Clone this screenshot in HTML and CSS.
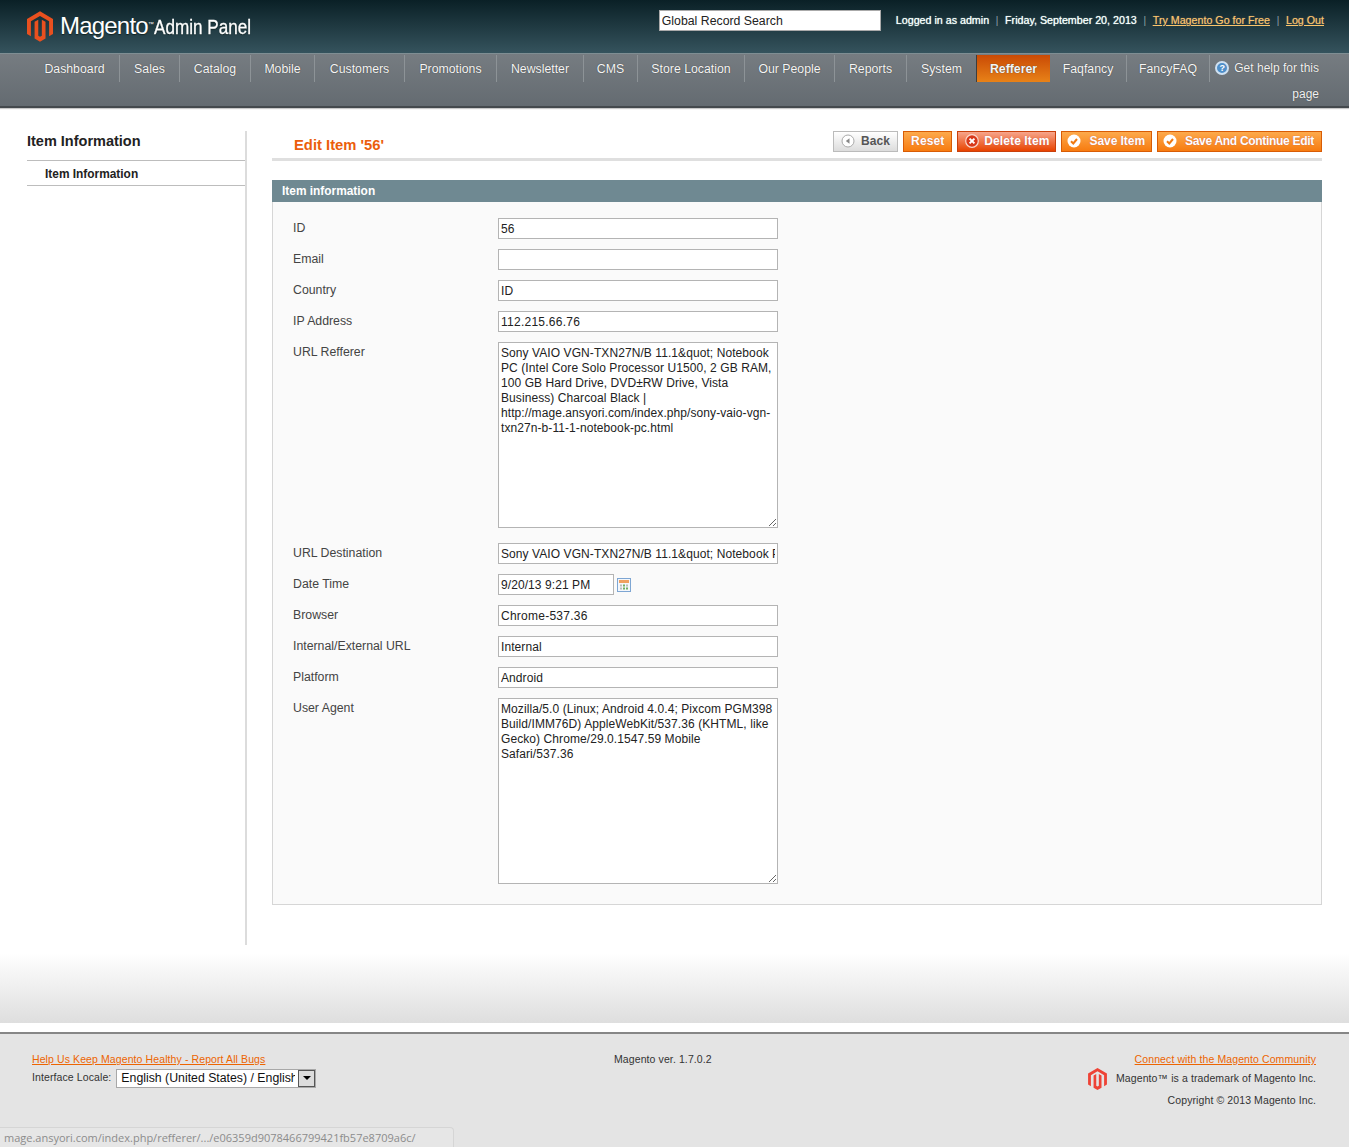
FILE: index.html
```html
<!DOCTYPE html>
<html lang="en">
<head>
<meta charset="utf-8">
<title>Magento Admin</title>
<link rel="stylesheet" href="styles.css">
</head>
<body>
<header class="top">
  <a class="logo" href="#">
    <svg class="logo-mark" viewBox="0 0 24 28" width="26" height="31"><path fill="#e9501f" d="M12 0 24 7v14l-3.6 2.1V9.1L12 4.2 3.6 9.1v14L0 21V7z"/><path fill="#e9501f" d="M13.7 7.7l3.4 2V25L12 28 7 25V9.700l3.4-2v14.800l1.600.9 1.700-.9z"/></svg>
    <span class="logo-word">Magento</span><span class="logo-tm">™</span><span class="logo-admin">Admin Panel</span>
  </a>
  <div class="top-right">
    <input class="global-search" type="text" value="Global Record Search">
    <p class="user-info">Logged in as admin<i>|</i>Friday, September 20, 2013<i>|</i><a href="#">Try Magento Go for Free</a><i>|</i><a href="#">Log Out</a></p>
  </div>
</header>
<nav class="nav">
  <ul class="nav-list">
    <li><a href="#">Dashboard</a></li>
    <li><a href="#">Sales</a></li>
    <li><a href="#">Catalog</a></li>
    <li><a href="#">Mobile</a></li>
    <li><a href="#">Customers</a></li>
    <li><a href="#">Promotions</a></li>
    <li><a href="#">Newsletter</a></li>
    <li><a href="#">CMS</a></li>
    <li><a href="#">Store Location</a></li>
    <li><a href="#">Our People</a></li>
    <li><a href="#">Reports</a></li>
    <li class="pre-active"><a href="#">System</a></li>
    <li class="active"><a href="#">Refferer</a></li>
    <li><a href="#">Faqfancy</a></li>
    <li><a href="#">FancyFAQ</a></li>
  </ul>
  <a class="help" href="#"><span class="help-icon">?</span>Get help for this page</a>
</nav>
<main class="layout">
  <aside class="side">
    <h3 class="side-title">Item Information</h3>
    <a class="side-item" href="#">Item Information</a>
  </aside>
  <section class="content">
    <div class="content-head">
      <h3 class="page-title">Edit Item '56'</h3>
      <div class="actions">
        <button class="btn btn-back"><svg class="ico" viewBox="0 0 14 14"><circle cx="7" cy="7" r="6" fill="#fff" stroke="#aaa"/><path d="M8.500 4.300v5.400L4.800 7z" fill="#888"/></svg>Back</button>
        <button class="btn btn-reset">Reset</button>
        <button class="btn btn-delete"><svg class="ico" viewBox="0 0 14 14"><circle cx="7" cy="7" r="6.300" fill="#d8391a" stroke="#fbd9cd" stroke-width="1.200"/><path d="M4.600 4.600l4.800 4.800M9.400 4.600l-4.800 4.800" stroke="#fff" stroke-width="2"/></svg>Delete Item</button>
        <button class="btn btn-save"><svg class="ico" viewBox="0 0 14 14"><circle cx="7" cy="7" r="6.500" fill="#fff"/><path d="M4 7.200l2.300 2.300L10 5" fill="none" stroke="#f07a12" stroke-width="2"/></svg>Save Item</button>
        <button class="btn btn-save btn-long"><svg class="ico" viewBox="0 0 14 14"><circle cx="7" cy="7" r="6.500" fill="#fff"/><path d="M4 7.200l2.300 2.300L10 5" fill="none" stroke="#f07a12" stroke-width="2"/></svg>Save And Continue Edit</button>
      </div>
    </div>
    <h4 class="section-head">Item information</h4>
    <div class="fieldset">
      <div class="row"><label>ID</label><input type="text" value="56"></div>
      <div class="row"><label>Email</label><input type="text" value=""></div>
      <div class="row"><label>Country</label><input type="text" value="ID"></div>
      <div class="row"><label>IP Address</label><input class="num" type="text" value="112.215.66.76"></div>
      <div class="row row-tall"><label>URL Refferer</label><textarea>Sony VAIO VGN-TXN27N/B 11.1&amp;quot; Notebook PC (Intel Core Solo Processor U1500, 2 GB RAM, 100 GB Hard Drive, DVD±RW Drive, Vista Business) Charcoal Black | http://mage.ansyori.com/index.php/sony-vaio-vgn-txn27n-b-11-1-notebook-pc.html</textarea></div>
      <div class="row"><label>URL Destination</label><input type="text" value="Sony VAIO VGN-TXN27N/B 11.1&amp;quot; Notebook PC (Intel Core Solo Processor U1500, 2 GB RAM)"></div>
      <div class="row"><label>Date Time</label><input class="date" type="text" value="9/20/13 9:21 PM"><svg class="cal" viewBox="0 0 14 14" width="14" height="14"><rect x=".5" y=".5" width="13" height="13" fill="#f4f7fb" stroke="#7ea6d3"/><rect x="2" y="2" width="10" height="3" fill="#f0a060"/><path d="M3 6.500h2v2H3zM9 6.500h2v2H9zM3 9.500h2v2H3z" fill="#bbb"/><path d="M6 6.500h2v2H6zM6 9.500h2v2H6zM9 9.500h2v2H9z" fill="#6fae63"/></svg></div>
      <div class="row"><label>Browser</label><input class="num" type="text" value="Chrome-537.36"></div>
      <div class="row"><label>Internal/External URL</label><input type="text" value="Internal"></div>
      <div class="row"><label>Platform</label><input type="text" value="Android"></div>
      <div class="row row-last"><label>User Agent</label><textarea>Mozilla/5.0 (Linux; Android 4.0.4; Pixcom PGM398 Build/IMM76D) AppleWebKit/537.36 (KHTML, like Gecko) Chrome/29.0.1547.59 Mobile Safari/537.36</textarea></div>
    </div>
  </section>
</main>
<div class="fade"></div>
<footer class="foot">
  <div class="foot-left">
    <a href="#">Help Us Keep Magento Healthy - Report All Bugs</a>
    <div class="locale"><span class="locale-label">Interface Locale:</span><div class="select"><span class="select-text">English (United States) / English</span><span class="select-btn"><i></i></span></div></div>
  </div>
  <div class="foot-mid">Magento ver. 1.7.0.2</div>
  <div class="foot-right">
    <a href="#">Connect with the Magento Community</a>
    <p class="tm"><svg viewBox="0 0 24 28" width="19" height="22"><path fill="#ee4336" d="M12 0 24 7v14l-3.600 2.100V9.100L12 4.200 3.600 9.100v14L0 21V7z"/><path fill="#ee4336" d="M13.700 7.700l3.400 2V25L12 28 7 25V9.700l3.400-2v14.800l1.600.9 1.700-.9z"/></svg>Magento™ is a trademark of Magento Inc.</p>
    <p class="copy">Copyright © 2013 Magento Inc.</p>
  </div>
</footer>
<div class="status">mage.ansyori.com/index.php/refferer/.../e06359d9078466799421fb57e8709a6c/</div>
</body>
</html>
```

FILE: styles.css
```css
* { box-sizing: border-box; }
html, body { margin: 0; padding: 0; }
body { position: relative; height: 1147px; background: #fff; color: #2f2f2f; font: 12.5px/1.2 "Liberation Sans", Arial, sans-serif; overflow: hidden; }
a { color: inherit; }
h3, h4, p, ul { margin: 0; padding: 0; }

.top { height: 54px; display: flex; justify-content: space-between; padding: 0 25px 0 27px; background: linear-gradient(#0a2026, #35535d); border-bottom: 1px solid #7f8e93; }
.logo { display: flex; align-items: center; height: 52px; color: #fff; text-decoration: none; text-shadow: 0 1px 1px #122; }
.logo-mark { margin-right: 7px; }
.logo-word { font-size: 24px; letter-spacing: -.8px; }
.logo-tm { font-size: 6px; align-self: flex-start; margin: 21px 0 0 0; }
.logo-admin { display: inline-block; font-size: 21px; margin: 2px 0 0 0; white-space: nowrap; -webkit-text-stroke: .3px #fff; transform: scaleX(.815); transform-origin: left center; }
.top-right { display: flex; align-items: flex-start; padding-top: 10px; }
.global-search { width: 222px; height: 21px; padding: 0 2px; border: 1px solid #aaa; background: #fff; color: #222; font: 12.3px "Liberation Sans", sans-serif; margin-right: 15px; }
.user-info { color: #fff; font-size: 10.7px; line-height: 20px; text-shadow: 0 0 1px #cfe; white-space: nowrap; }
.user-info i { font-style: normal; color: #8fa3a9; margin: 0 6.700px; text-shadow: none; font-size: 10px; }
.user-info a { color: #fbc56b; text-decoration: underline; text-shadow: 0 0 1px #a86; }

.nav { height: 54px; position: relative; display: flex; background: linear-gradient(#767c81, #646b71); border-bottom: 2px solid #44494d; box-shadow: 0 1px 1px #c8c8c8; padding: 1px 30px 0; }
.nav-list { display: flex; list-style: none; height: 27px; }
.nav-list li { text-align: center; border-right: 1px solid #8d9397; line-height: 28px; height: 27px; font-size: 12.3px; }
.nav-list li:nth-child(1) { width: 90px; }
.nav-list li:nth-child(2) { width: 60px; }
.nav-list li:nth-child(3) { width: 71px; }
.nav-list li:nth-child(4) { width: 64px; }
.nav-list li:nth-child(5) { width: 90px; }
.nav-list li:nth-child(6) { width: 92px; }
.nav-list li:nth-child(7) { width: 87px; }
.nav-list li:nth-child(8) { width: 54px; }
.nav-list li:nth-child(9) { width: 107px; }
.nav-list li:nth-child(10) { width: 90px; }
.nav-list li:nth-child(11) { width: 72px; }
.nav-list li:nth-child(12) { width: 69px; }
.nav-list li:nth-child(13) { width: 74px; }
.nav-list li:nth-child(14) { width: 77px; }
.nav-list li:nth-child(15) { width: 83px; }
.nav-list a { color: #f6f6f6; text-decoration: none; text-shadow: 0 0 1px #333; white-space: nowrap; }
.nav-list .pre-active { border-right: 0; }
.nav-list .active { background: linear-gradient(#c94a05, #e88218); border-left: 1px solid #3d3d3d; border-right: 0; font-weight: 700; }
.help { flex: 0 0 105px; margin-left: 4px; color: #f2f2f2; text-decoration: none; text-align: right; line-height: 26px; font-size: 12px; text-shadow: 0 0 1px #333; }
.help-icon { display: inline-block; width: 14px; height: 14px; margin-right: 5px; border-radius: 50%; background: #4f8fc9; border: 2px solid #cfe1f2; color: #fff; font: 700 9px/10px "Liberation Sans", sans-serif; text-align: center; vertical-align: 1px; text-shadow: none; }

.layout { display: flex; gap: 25px; padding: 23px 27px 0; }
.side { flex: 0 0 220px; border-right: 2px solid #dcdcdc; }
.side-title { height: 30px; border-bottom: 1px solid #bdbdbd; font-size: 14.500px; line-height: 21px; color: #222; }
.side-item { display: block; height: 25px; padding-left: 18px; border-bottom: 1px solid #bdbdbd; color: #222; font-weight: 700; font-size: 11.900px; line-height: 26px; text-decoration: none; }
.content { flex: 1; padding-bottom: 40px; }
.content-head { display: flex; justify-content: space-between; height: 30px; border-bottom: 3px solid #dfdfdf; margin-bottom: 19px; }
.page-title { padding: 6px 0 0 22px; color: #eb5e0b; font-size: 14.800px; }
.actions { display: flex; gap: 5px; height: 21px; }
.btn { display: inline-flex; align-items: center; height: 21px; padding: 0 7px 2px; border: 1px solid #d85c05; background: linear-gradient(#fdaa4c, #f77b10); color: #fff; font: 700 12px "Liberation Sans", sans-serif; letter-spacing: .1px; text-shadow: 0 0 1px #b55; white-space: nowrap; }
.ico { width: 14px; height: 14px; }
.btn-back { border-color: #bbb; background: linear-gradient(#fff, #dcdcdc); color: #555; text-shadow: none; }
.btn-back .ico { margin-right: 6px; }
.btn-delete { padding-right: 6px; border-color: #c9400c; background: linear-gradient(#f7a58b, #e84300); }
.btn-delete .ico { margin-right: 5px; }
.btn-save { padding-left: 5px; padding-right: 6px; letter-spacing: -.05px; }
.btn-save .ico { margin-right: 8px; }
.btn-long { padding-right: 7px; letter-spacing: -.3px; }
.section-head { height: 22px; padding-left: 10px; background: #6f8992; color: #fff; font-size: 11.900px; line-height: 22px; }
.fieldset { background: #fafafa; border: 1px solid #d6d6d6; border-top: 0; padding: 16px 20px 20px; }
.row { display: flex; align-items: flex-start; margin-bottom: 10px; }
.row-tall { margin-bottom: 15px; }
.row-last { margin-bottom: 0; }
.row label { flex: 0 0 205px; color: #444; font-size: 12.300px; line-height: 20px; }
.row input, .row textarea { width: 280px; border: 1px solid #b4b4b4; background: #fff; color: #222; padding: 0 2px; font: 12px/15px "Liberation Sans", sans-serif; letter-spacing: .08px; border-radius: 0; outline: 0; }
.row input { height: 21px; }
.row .num { letter-spacing: .25px; }
.row textarea { display: block; height: 186px; padding: 3px 2px 2px; }
.row .date { width: 116px; }
.cal { margin: 4px 0 0 3px; }

.fade { height: 78px; background: linear-gradient(#fff 8px, #dedede); }
.foot { height: 115px; margin-top: 9px; background: #e4e4e4; border-top: 2px solid #868686; padding: 19px 33px 0 32px; display: flex; color: #333; font-size: 10.500px; letter-spacing: .1px; }
.foot a { color: #ed6502; }
.foot-left { flex: 0 0 582px; }
.foot-right { flex: 1; text-align: right; }
.locale { display: flex; align-items: flex-start; margin-top: 3px; }
.locale-label { padding-top: 2px; }
.select { display: flex; width: 200px; height: 19px; margin-left: 5px; background: #fff; border: 1px solid #a8a8a8; font-size: 12.300px; letter-spacing: 0; color: #111; overflow: hidden; }
.select-text { flex: 1; margin-right: 3px; padding: 1px 0 0 4px; overflow: hidden; white-space: nowrap; }
.select-btn { flex: 0 0 17px; background: #dcdcdc; border: 1px solid #555; display: flex; align-items: center; justify-content: center; }
.select-btn i { width: 0; height: 0; border: 4px solid transparent; border-top-color: #000; border-bottom: 0; }
.tm { display: flex; justify-content: flex-end; align-items: center; height: 22px; margin-top: 2px; }
.tm svg { margin-right: 9px; }
.copy { margin-top: 4px; }
.status { position: absolute; left: 0; bottom: 0; width: 454px; height: 20px; padding: 2px 0 0 4px; background: #e6e6e6; border: 1px solid #d5d5d5; border-width: 1px 1px 0 0; border-top-right-radius: 4px; color: #8c8c8c; font: 11px "Open Sans", sans-serif; white-space: nowrap; }
```
